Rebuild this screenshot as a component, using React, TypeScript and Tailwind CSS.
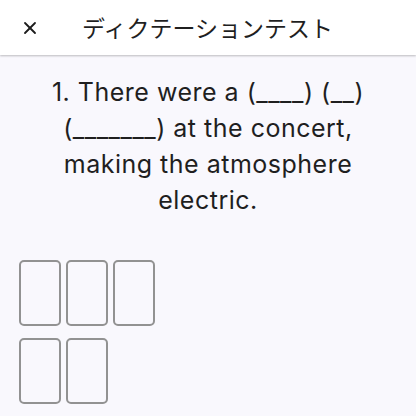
import { X } from 'lucide-react'

const ROWS = [3, 2]

export default function App() {
  return (
    <div className="w-[416px] h-[416px] overflow-hidden bg-[#f9f8fd] font-['Inter','Noto_Sans_CJK_JP',sans-serif]">
      <header className="h-[55px] bg-white flex items-center shadow-[0_1px_2px_rgba(0,0,0,0.25)] relative z-10">
        <div className="w-[60px] flex justify-center">
          <X size={20} strokeWidth={2.2} className="text-[#1c1c1c]" />
        </div>
        <h1 className="ml-[22px] text-[23px] text-[#1f1f1f] font-['Noto_Sans_CJK_JP',sans-serif] font-normal">
          ディクテーションテスト
        </h1>
      </header>

      <main>
        <p className="mt-[19px] px-8 text-center text-[25px] leading-[36px] tracking-[0.5px] text-[#1f1f1f]">
          1. There were a (____) (__) (_______) at the concert, making the atmosphere electric.
        </p>

        <div className="mt-[42px] pl-[19px] flex flex-col gap-[12px]">
          {ROWS.map((count, i) => (
            <div key={i} className="flex gap-[5px]">
              {Array.from({ length: count }).map((_, j) => (
                <div
                  key={j}
                  className="w-[42px] h-[66px] rounded-[5px] border-2 border-[#929292] bg-transparent"
                />
              ))}
            </div>
          ))}
        </div>
      </main>
    </div>
  )
}
